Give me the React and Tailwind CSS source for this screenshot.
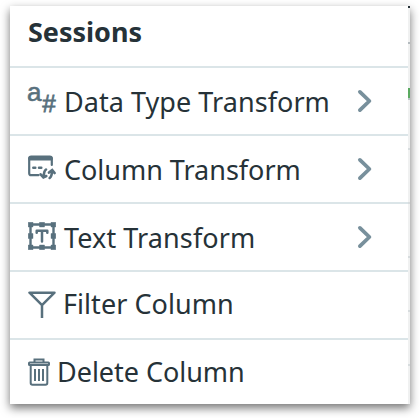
const DataTypeIcon = () => (
  <div className="relative h-8 w-7 shrink-0 font-['Liberation_Sans'] leading-none text-[#58707d]">
    <span className="absolute left-[-1px] top-[-6px] text-[26px] [-webkit-text-stroke:0.6px]">a</span>
    <span className="absolute left-[14px] top-[7px] text-[24px] italic [-webkit-text-stroke:0.8px]">#</span>
  </div>
);

const ColumnIcon = () => (
  <svg className="mb-[3px]" width="28" height="26" viewBox="0 0 28 26" fill="none" stroke="#58707d" strokeLinecap="round">
    <path d="M10.5 20.2H3.2Q1.2 20.2 1.2 18.2V3.5Q1.2 1.5 3.2 1.5H21.8Q23.8 1.5 23.8 3.5V10" strokeWidth="2.2" />
    <path d="M2.2 3.5H22.8" strokeWidth="4" />
    <path d="M5.3 12.7H7.3M11 12.7H13.3" strokeWidth="2.5" />
    <path d="M18 14.5Q15.8 16 15.7 22M12.6 19.3L15.4 22.5L18.3 21" strokeWidth="2.6" />
    <path d="M21.7 23Q23.9 21.5 24 15.5M21 17.6L24.2 15L26.6 18" strokeWidth="2.6" />
  </svg>
);

const TextIcon = () => (
  <svg className="mb-[2px]" width="28" height="28" viewBox="0 0 28 28" fill="none" stroke="#58707d">
    <path d="M2.5 2.5H25.5V25.5H2.5Z" strokeWidth="2.4" />
    <path d="M0.2 0.2H5V5H0.2ZM11.5 0.2H16.5V5H11.5ZM23 0.2H27.8V5H23ZM0.2 11.5H5V16.5H0.2ZM23 11.5H27.8V16.5H23ZM0.2 23H5V27.8H0.2ZM11.5 23H16.5V27.8H11.5ZM23 23H27.8V27.8H23Z" fill="#58707d" stroke="#58707d" strokeWidth="0.4" strokeLinejoin="round" />
    <path d="M8.7 10.7V8.7H19.3V10.7M14 8.7V19.5" strokeWidth="2.5" strokeLinecap="round" strokeLinejoin="round" />
  </svg>
);

const FilterIcon = () => (
  <svg className="mb-[1px]" width="28" height="28" viewBox="0 0 28 28" fill="none" stroke="#58707d" strokeWidth="2.5" strokeLinejoin="round">
    <path d="M1.5 1.7H26.5L14 14.2ZM14 14V27" />
  </svg>
);

const TrashIcon = () => (
  <svg width="22" height="28" viewBox="0 0 22 28" fill="none" stroke="#58707d" strokeWidth="2">
    <path d="M6.5 4.5V1.4H15.5V4.5" />
    <rect x="1" y="4.5" width="20" height="2.6" rx="0.6" />
    <path d="M2.7 7.2V25Q2.7 26.8 4.5 26.8H17.5Q19.3 26.8 19.3 25V7.2" />
    <path d="M7 11V23M11 11V23M15 11V23" />
  </svg>
);

const Chevron = () => (
  <svg className="ml-auto" width="16" height="24" viewBox="0 0 16 24" fill="none" stroke="#78909c" strokeWidth="3.8" strokeLinecap="round" strokeLinejoin="round">
    <path d="M2.9 2.9L12.4 12L2.9 21.1" />
  </svg>
);

const items = [
  { label: 'Data Type Transform', icon: <DataTypeIcon />, gap: 'gap-[8px]', text: 'pt-[2px] tracking-[0.05px]', submenu: true },
  { label: 'Column Transform', icon: <ColumnIcon />, gap: 'gap-[8px]', text: 'pt-[2px] tracking-[-0.02px]', submenu: true },
  { label: 'Text Transform', icon: <TextIcon />, gap: 'gap-[8px]', text: 'pt-[2px] tracking-[0.1px]', submenu: true },
  { label: 'Filter Column', icon: <FilterIcon />, gap: 'gap-[7px]', text: 'pb-[2px] tracking-[0.05px]' },
  { label: 'Delete Column', icon: <TrashIcon />, gap: 'gap-[7px]', text: 'tracking-[-0.03px]' },
];

const App = () => {
  return (
    <div className="h-[418px] w-[420px] overflow-hidden bg-white pl-[10px] pt-[6px] font-['Noto_Sans',sans-serif] text-[#263238]">
      <div className="flex h-[398px] w-[400px] bg-white shadow-[0_4px_9px_rgba(0,0,0,0.55)]">
        <div className="w-[398px]">
          <h1 className="flex h-[60px] items-center pb-[8px] pl-[18px] text-[27px] font-bold tracking-[-0.02px]">Sessions</h1>
          <ul>
            {items.map((item) => (
              <li key={item.label} className={`flex h-[68px] items-center border-t-2 border-[#dbe5e8] pl-[18px] pr-[35px] last:h-[66px] ${item.gap}`}>
                {item.icon}
                <span className={`whitespace-nowrap text-[27px] leading-[36px] ${item.text}`}>{item.label}</span>
                {item.submenu && <Chevron />}
              </li>
            ))}
          </ul>
        </div>

        {/* Sliver of the table behind the menu */}
        <div className="flex w-[2px] flex-col bg-[#f0f1f1]">
          <div className="h-[2px] bg-[#263238]" />
          <div className="mt-[34px] h-[2px] bg-[#b4bbbf]" />
          <div className="mt-[44px] h-[10px] bg-[#5aaa60]" />
          <div className="h-[2px] bg-[#b9c4c5]" />
          <div className="mt-[48px] h-[2px] bg-[#d7dcde]" />
          <div className="mt-[52px] h-[2px] bg-[#d7dcde]" />
          <div className="mt-[52px] h-[2px] bg-[#d7dcde]" />
          <div className="mt-[52px] h-[2px] bg-[#d7dcde]" />
          <div className="mt-[52px] h-[2px] bg-[#d7dcde]" />
        </div>
      </div>
    </div>
  );
};

export default App;
